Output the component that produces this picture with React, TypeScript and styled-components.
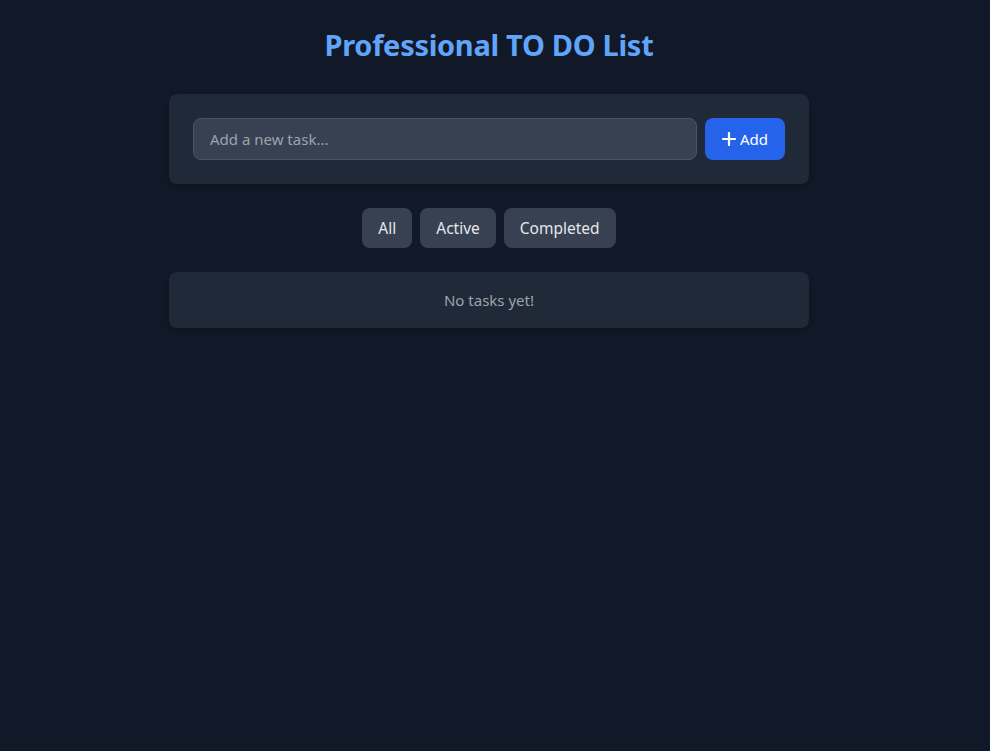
import React, { useState } from "react";
import styled, { createGlobalStyle } from "styled-components";

const Global = createGlobalStyle`
  html, body { margin: 0; padding: 0; background: #111827; }
  body { font-family: "Noto Sans", "Open Sans", sans-serif; color: #f3f4f6; }
  * { box-sizing: border-box; }
`;

const Page = styled.div`
  min-height: 751px;
  background: #111827;
  padding: 27px 12px 32px 0;
`;

const Container = styled.div`
  max-width: 640px;
  margin: 0 auto;
  display: flex;
  flex-direction: column;
`;

const Title = styled.h1`
  margin: 0 0 31px;
  text-align: center;
  font-size: 29px;
  line-height: 36px;
  font-weight: 700;
  color: #60a5fa;
  letter-spacing: -0.3px;
`;

const Card = styled.div`
  background: #1f2937;
  border-radius: 8px;
  padding: 24px;
  box-shadow: 0 4px 6px -1px rgba(0, 0, 0, 0.1), 0 2px 4px -2px rgba(0, 0, 0, 0.1);
`;

const InputRow = styled.form`
  display: flex;
  gap: 8px;
`;

const TaskInput = styled.input`
  flex: 1;
  height: 42px;
  padding: 0 16px;
  background: #374151;
  border: 1px solid #4b5563;
  border-radius: 8px;
  color: #f3f4f6;
  font-family: inherit;
  font-size: 15px;
  outline: none;
  &::placeholder { color: #9ca3af; }
`;

const AddButton = styled.button`
  display: flex;
  align-items: center;
  justify-content: center;
  gap: 4px;
  width: 80px;
  height: 42px;
  background: #2563eb;
  color: #ffffff;
  border: none;
  border-radius: 8px;
  font-family: inherit;
  font-size: 15px;
  cursor: pointer;
`;

const Filters = styled.div`
  display: flex;
  justify-content: center;
  gap: 8px;
  margin: 24px 0;
`;

const FilterButton = styled.button<{ $active?: boolean }>`
  height: 40px;
  padding: 0 16px;
  background: ${(p) => (p.$active ? "#374151" : "#374151")};
  color: #e5e7eb;
  border: none;
  border-radius: 8px;
  font-family: inherit;
  font-size: 15.5px;
  cursor: pointer;
`;

const EmptyCard = styled.div`
  background: #1f2937;
  border-radius: 8px;
  height: 56px;
  display: flex;
  align-items: center;
  justify-content: center;
  color: #9ca3af;
  font-size: 15px;
  box-shadow: 0 4px 6px -1px rgba(0, 0, 0, 0.1), 0 2px 4px -2px rgba(0, 0, 0, 0.1);
`;

const PlusIcon = () => (
  <svg width="14" height="14" viewBox="0 0 14 14" fill="none" stroke="currentColor" strokeWidth="2.2" strokeLinecap="round">
    <path d="M7 1v12M1 7h12" />
  </svg>
);

export default function App() {
  const [filter, setFilter] = useState("all");
  return (
    <>
      <Global />
      <Page>
        <Container>
          <Title>Professional TO DO List</Title>
          <Card>
            <InputRow onSubmit={(e) => e.preventDefault()}>
              <TaskInput placeholder="Add a new task..." />
              <AddButton type="submit">
                <PlusIcon />
                Add
              </AddButton>
            </InputRow>
          </Card>
          <Filters>
            <FilterButton $active={filter === "all"} onClick={() => setFilter("all")}>All</FilterButton>
            <FilterButton $active={filter === "active"} onClick={() => setFilter("active")}>Active</FilterButton>
            <FilterButton $active={filter === "completed"} onClick={() => setFilter("completed")}>Completed</FilterButton>
          </Filters>
          <EmptyCard>No tasks yet!</EmptyCard>
        </Container>
      </Page>
    </>
  );
}
